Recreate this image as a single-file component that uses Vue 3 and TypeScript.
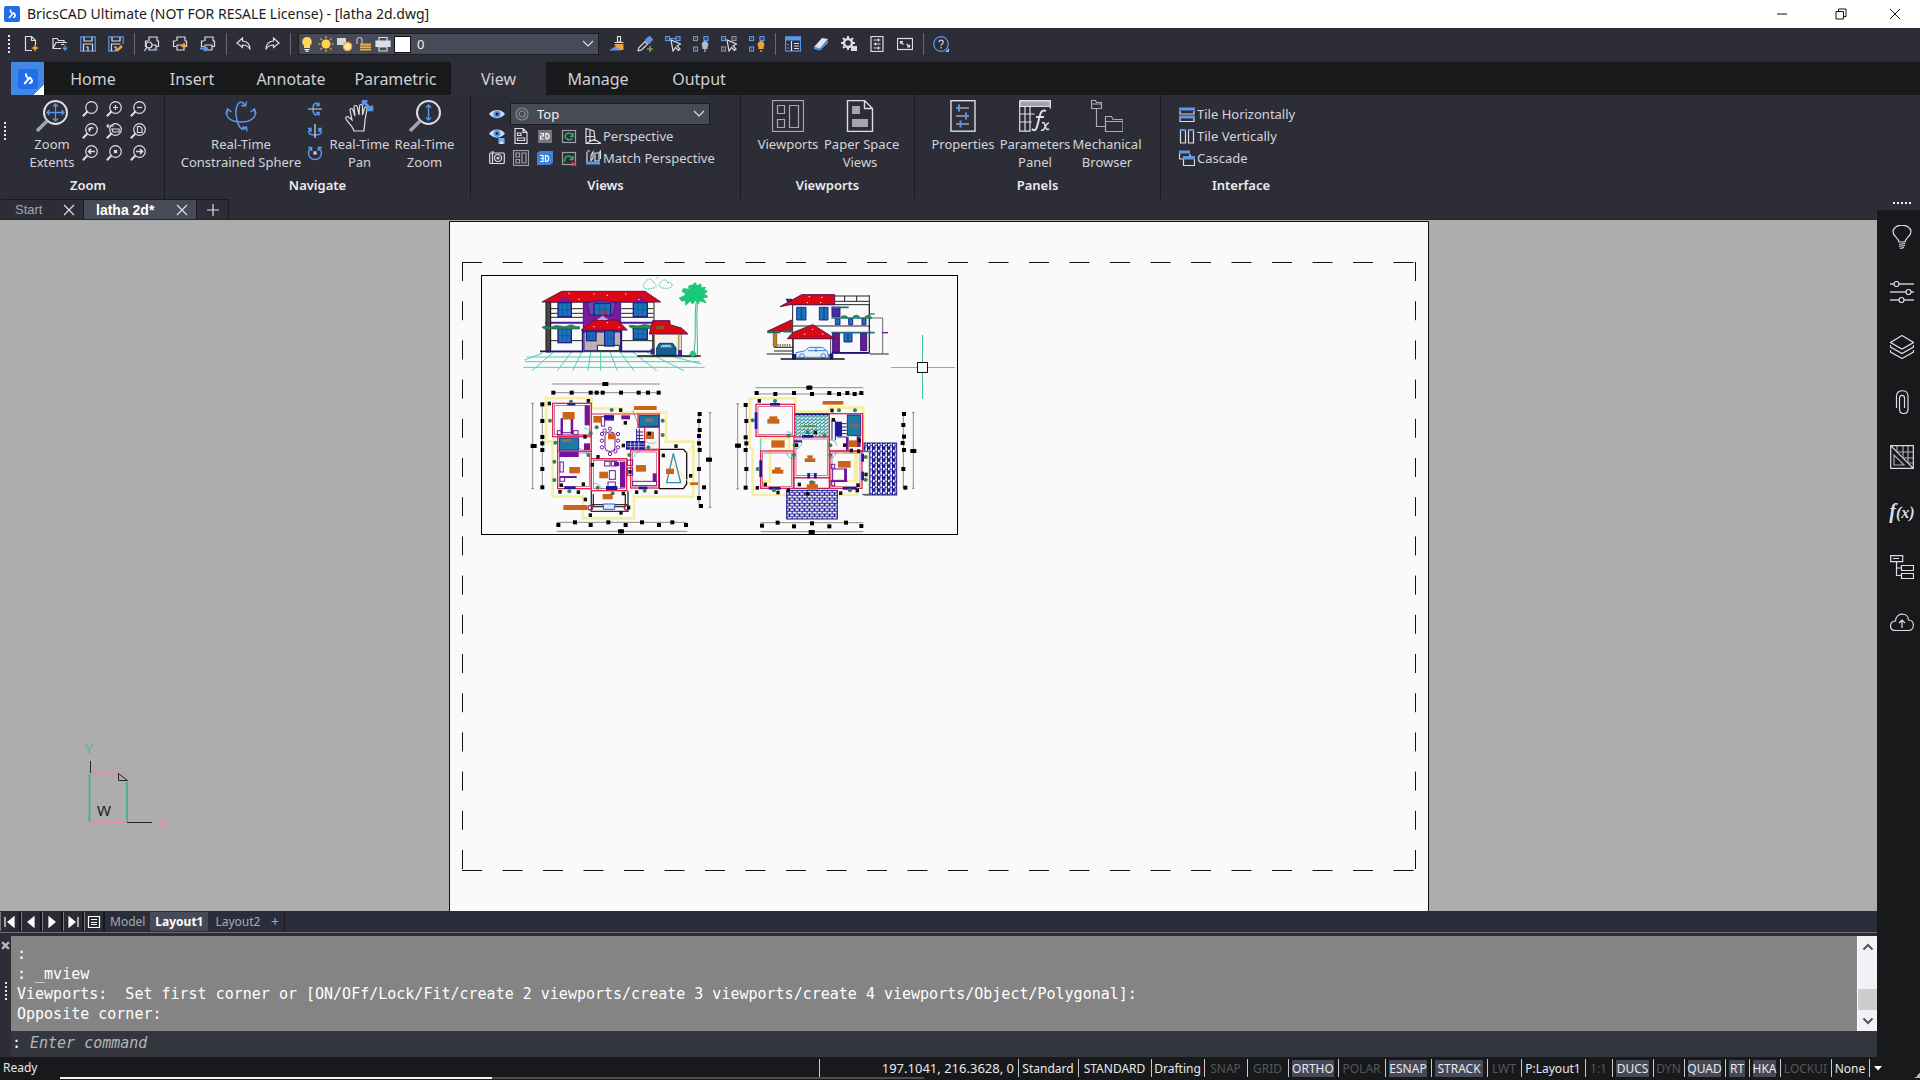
<script setup lang="ts">
import { ref } from 'vue'

type Box = [number, number, number, number]
type Dot = [number, number]

const L = '#dcdee6'
const B = '#5b97e8'
const O = '#f0a23a'
const lens = `<circle cx="9.500" cy="6.500" r="5.800"/><path d="M5.500 10.500L.8 15.200" stroke-width="2"/>`
const sq = (x: number, y: number, c: string) =>
  `<rect x="${x}" y="${y}" width="4" height="4" stroke="${c}"/><path d="M${x + 1.5} ${y + 2}h1" stroke="${c}"/>`
const printer = `<path d="M5 5V1h8v4M4 5H1.500v5.500H4M13 5h1.500v5.500H12M5 9h7v5H5z"/>`
const cursorArrow = `<path d="M6 4l2 11 2.500-3.500 3 3 1.500-1.500-3-3 3.500-2z" fill="#2d2d38"/>`

/* Glyph bodies, drawn on a 16-unit grid unless listed in bigIcons */
const icons: Record<string, string> = {
  brand: `<rect width="16" height="16" rx="2" fill="#1f6fe8" stroke="none"/><path d="M6.500 3.500v2l2 2.500-3.500 4M9 6.500c3 2 3 4 0 5" stroke="#fff" stroke-width="1.600"/>`,
  newFile: `<path d="M8 14.500H1.500v-14h6l4 4V9M7.500.5v4h4"/><path d="M11 8l1.200 2.800L15 12l-2.800 1.200L11 16l-1.200-2.800L7 12l2.800-1.200z" fill="${O}" stroke="none"/>`,
  open: `<path d="M9 12.500H1v-10h4l1.500 2H12v2M1 12.500l3-6h11M9 8.500h3"/><path d="M13 8.500v5M10.800 11.500L13 14l2.200-2.500" stroke="${B}"/>`,
  save: `<path d="M.8.8h14.400v14.400H.8z" stroke="${B}"/><path d="M4 1v4h8V1M3.500 15V8h9v7M6 11h2v4"/>`,
  saveAs: `<path d="M15.200 8V.8H.8v14.400h8" stroke="${B}"/><path d="M4 1v4h8V1M3.500 15V8h9M6 11h2v4"/><path d="M9 14.500l5-4.500" stroke="${O}" stroke-width="2.500"/>`,
  preview: printer + `<circle cx="5" cy="9" r="3" fill="#2d2d38"/><path d="M3 11l-2.500 4"/><path d="M10 12l4 2" stroke="${B}"/>`,
  print: printer + `<path d="M12 6l1.200 2.800L16 10l-2.800 1.200L12 14l-1.200-2.800L8 10l2.800-1.200z" fill="${O}" stroke="none"/>`,
  publish: printer + `<path d="M0 12.500h6M4 10l3 2.500L4 15" stroke="${B}" stroke-width="2"/>`,
  undo: `<path d="M6.500 2L1 7l5.500 4.500V9c4 0 6 1 7.500 4.500C14 8 11 5.300 6.500 5z"/>`,
  redo: `<path d="M9.500 2L15 7l-5.500 4.500V9C5.500 9 3.500 10 2 13.500 2 8 5 5.300 9.500 5z"/>`,
  bulb: `<path d="M8 1a4.800 4.800 0 0 0-3 8.500V12h6V9.500A4.800 4.800 0 0 0 8 1z" fill="#ffd75a" stroke="none"/><path d="M5.500 13.500h5M6.500 15.200h3" stroke="#fff"/>`,
  sun: `<circle cx="8" cy="8" r="4.500" fill="#ffd54a" stroke="none"/><path d="M8 0v2.500M8 13.500V16M0 8h2.500M13.500 8H16M2.300 2.300l1.800 1.800M11.900 11.900l1.800 1.800M13.700 2.300l-1.800 1.800M4.100 11.900l-1.800 1.800" stroke="#f0b030"/>`,
  vpFreeze: `<rect x="0" y="2" width="9" height="7" fill="#d8d8dc" stroke="none"/><circle cx="10.500" cy="10.500" r="4.200" fill="#ffe79a" stroke="${O}"/>`,
  lock: `<path d="M1 8V4a2.500 2.500 0 0 1 5 0v4" stroke="#b9bbc2"/><path d="M4 7.500h11v7H4z" fill="#e5b04e" stroke="none"/><path d="M4 10h11M4 12.500h11" stroke="#8a6630"/>`,
  plot: `<path d="M4 5V1.500h8V5M4 11h8v4H4z"/><path d="M1 5h14v5.500H1z" fill="${L}"/>`,
  brush: `<path d="M8.500.5h3V6h-3zM5.500 6.500h9"/><path d="M5.500 8h9v6h-7z" fill="${O}" stroke="none"/><path d="M0 14.500h12L6 10.500z" fill="${B}" stroke="none"/>`,
  picker: `<path d="M1 14.500l1-3 6-6 2.500 2.500-6 6-3 .8z"/><path d="M8.500 4l4-3.500 3 3L12 7.500z" fill="${B}" stroke="${B}"/><path d="M13 10v6M10 13h6" stroke="#86d04c"/>`,
  isolate: sq(.5, .5, B) + sq(11, .5, B) + `<path d="M5 2.500h6" stroke="${B}"/>` + cursorArrow,
  hide: sq(.5, .5, '#8d8d96') + sq(.5, 11, B) + sq(11, .5, B) + `<path d="M12 5.500a3 3 0 0 0-2 5v2h4v-2a3 3 0 0 0-2-5zM12 13v3" fill="#b9bbc4" stroke="#b9bbc4"/>`,
  showSel: sq(.5, .5, B) + sq(11, .5, '#8d8d96') + sq(.5, 11, '#8d8d96') + cursorArrow,
  showAll: sq(.5, .5, B) + sq(.5, 11, B) + sq(11, .5, B) + `<path d="M12 5.500a3 3 0 0 0-2 5v2h4v-2a3 3 0 0 0-2-5z" fill="${O}" stroke="${O}"/><path d="M11 15h2"/>`,
  explorer: `<rect x=".5" y="1" width="15" height="14" stroke="${B}"/><path d="M0 2.500h16" stroke="${B}" stroke-width="4"/><path d="M6.500 5v10M9 7.500h5M9 10h5M9 12.500h5"/><path d="M2 8.500h2M2 12h2" stroke="${B}"/>`,
  eraser: `<path d="M1 11L9 2l6 1-8 9.500z" fill="#dfe4ee" stroke="none"/><path d="M1 11l6 1.500 8-8.500v3l-8 7.500-6-1.500z" fill="${B}" stroke="none"/>`,
  gear: `<circle cx="7" cy="7" r="4" stroke-width="2.500"/><path d="M7 0v2M7 12v2M0 7h2M12 7h2M2 2l1.500 1.500M12 2l-1.500 1.500M2 12l1.500-1.500" stroke-width="2"/><rect x="10" y="10" width="6" height="5" fill="${L}" stroke="none"/>`,
  settings: `<rect x="2" y=".5" width="12" height="15"/><path d="M4.500 4h7M4.500 8h7M4.500 12h7M9.500 2.500v3M6.500 6.500v3M9.500 10.500v3"/>`,
  fullscreen: `<rect x=".5" y="2.500" width="15" height="11"/><path d="M3.500 8V5.500H6M3.500 5.500l3 3M12.500 8.500V11H10M12.500 11l-3-3"/>`,
  help: `<circle cx="8" cy="8" r="7.300" stroke="${B}"/><path d="M6 6.200c0-2.800 4.200-2.600 4.200 0 0 1.600-2.200 1.800-2.200 3.500M8 11v1.500"/><path d="M12 16h4v-4z" fill="#9ab8ea" stroke="none"/>`,
  zWindow: lens,
  zIn: lens + `<path d="M7 6.500h5M9.500 4v5"/>`,
  zOut: lens + `<path d="M7 6.500h5"/>`,
  zPrev: lens + `<path d="M7.500 9V6c0-1.500 3-2 4-.5M6 7l1.500-2L9 7"/>`,
  zDyn: lens + `<path d="M0 3h8M2 1v4M6 6h7v3H7z"/>`,
  zPage: lens + `<path d="M7.500 3.500h2.500l2 2v4H7.500z"/>`,
  zLeft: lens + `<path d="M13 6.500H7M9 4L6.500 6.500 9 9" stroke-width="1.600"/>`,
  zCenter: lens + `<rect x="8.500" y="5.500" width="2" height="2" fill="${L}"/>`,
  zRight: lens + `<path d="M6 6.500h6M10 4l2.500 2.500L10 9" stroke-width="1.600"/>`,
  rotX: `<g stroke="${B}" stroke-width="1.500"><path d="M11.500 4C9.500.5 6 2 6 8s3.500 7.500 5.500 4M9 4.500h3V1.500M9 11.500h3v3"/></g><path d="M1 8h14" stroke="#b4bccf"/>`,
  rotY: `<g stroke="${B}" stroke-width="1.500"><path d="M3.500 6C0 9 2 12 8 12s8-3 4.500-6M1 5.500h3V9M15 5.500h-3V9"/></g><path d="M8 1v14"/>`,
  rotZ: `<g stroke="${B}" stroke-width="1.500"><path d="M4 3a6.500 6.500 0 1 0 8 0M1 2.500h3.500V6M15 2.500h-3.500V6"/></g><rect x="7" y="7" width="2" height="2"/>`,
  eye: `<path d="M0 8c4-5.500 12-5.500 16 0-4 5.500-12 5.500-16 0z" fill="#c9dcf6" stroke="none"/><circle cx="8" cy="8" r="3.600" fill="${B}" stroke="none"/><circle cx="8" cy="8" r="1.500" fill="#111" stroke="none"/>`,
  eyeSave: `<path d="M0 5.500c4-5.500 12-5.500 16 0-4 5.500-12 5.500-16 0z" fill="#c9dcf6" stroke="none"/><circle cx="8" cy="5.500" r="3.400" fill="${B}" stroke="none"/><circle cx="8" cy="5.500" r="1.300" fill="#111" stroke="none"/><path d="M9.500 10h6v6h-6z" fill="#7fb2f4" stroke="none"/><path d="M12.500 14v2" stroke="#fff" stroke-width="2"/>`,
  camera: `<rect x=".7" y="3" width="14.600" height="10.500" rx="1"/><circle cx="9" cy="8" r="3.500"/><circle cx="9" cy="8" r="1"/><path d="M3.500 3v10M2 2h3"/>`,
  sheet: `<path d="M2 .5h8l4 4v11H2zM10 .5v4h4M4.500 5h3.500v2.500H4.500zM4.500 10h7v2.500h-7z"/>`,
  vports: `<g stroke="#a0a2aa"><rect x=".5" y=".5" width="15" height="15"/><path d="M3 3h3.500v4H3zM3 9.500h3.500V13H3zM9 3h4v10H9z"/></g>`,
  d2: `<path d="M1 2h14v13H1z" fill="#75777d" stroke="none"/><path d="M3.500 5.500h3V8h-3v3h3M9 5.500h1.500l1.500 1.500v2.500L10.500 11H9z" stroke="#fff" stroke-width="1.200"/>`,
  d3: `<path d="M0 3l3-2h13v12l-3 2H0z" fill="#3f82da" stroke="none"/><path d="M3 5.500h3v6H3M4 8.500h2M8.500 5.500H10l1.500 1.500v3L10 11.500H8.500z" stroke="#fff" stroke-width="1.200"/>`,
  regen: `<rect x="1.500" y="2.500" width="13" height="12" stroke="#9da0a6"/><path d="M4 10c0-6 6-6 8-2M12 5v3.500H9M4.500 9.500c3 4 6 2 7 1" stroke="#29b05d" stroke-width="1.500"/>`,
  regenAll: `<rect x="1.500" y="2.500" width="13" height="12" stroke="#9da0a6"/><path d="M3.500 12c0-8 6-7 8-3M12 6v3.500H8.500" stroke="#29b05d" stroke-width="1.600"/><path d="M11 12l4 4M15 12l-4 4" stroke="#d9404a" stroke-width="1.500"/>`,
  persp: `<path d="M1 .5v15h15L10 12 9 3zM1 15.500L10 11M5 2v11M1 8.500h8.500M4 12.500h8"/>`,
  matchP: `<path d="M2 2v11M5 1H2M6 5v6M6 5l2-3v6l-2 3M10 3h4v8h-4zM14 3l1.500-2v8"/><path d="M1 13h14" stroke="${B}" stroke-width="3"/>`,
  target: `<g stroke="#868c98"><circle cx="8" cy="8" r="6"/><circle cx="8" cy="8" r="3"/></g>`,
  tileH: `<path d="M1 5v3h14V5M1 12v3.500h14V12"/><path d="M0 3h16M0 11h16" stroke="${B}" stroke-width="3"/>`,
  tileV: `<path d="M1.500 2h5v13h-5zM9.500 2h5v13h-5z"/><path d="M1 2h6M9 2h6" stroke="${B}" stroke-width="2"/>`,
  cascade: `<path d="M.5 2v7H4M4.500 7h11v8.500h-11zM11 4v3"/><path d="M0 2h11M4 8h12" stroke="${B}" stroke-width="3"/>`,
}

/* Ribbon glyphs on a 32-unit grid */
const bigLens = `<circle cx="19.500" cy="12.500" r="11.500" stroke-width="2"/><path d="M11 21L1 31" stroke="#a3a4aa" stroke-width="3.500"/>`
const bigIcons: Record<string, string> = {
  extents: bigLens + `<g stroke="${B}" stroke-width="1.300"><path d="M19.500 4v17M11 12.500h17M17 6.500L19.500 4 22 6.500M17 18.500l2.500 2.500 2.500-2.500M13.500 10L11 12.500l2.500 2.500M25.500 10l2.500 2.500-2.500 2.500"/></g>`,
  sphere: `<g stroke="${B}" stroke-width="1.500"><path d="M3 10c-4 6 2 12 13 12s17-6 13-12M1 14l1.500-5 4 3M31 14l-1.500-5-4 3M20 5C13-4 9 10 12 20c2 8 6 12 9 7M16 5.500l4.500.5 1-4.500M17 27.500l4.500-.5.500 4.500"/></g>`,
  pan: `<path d="M10 31c-1-5-6-8-8-12-1-2 1-3 2.500-2L8 20 6 10c0-2 2.500-2 3 0l2 6-1-9c0-2 3-2 3.300 0L15 15l.5-9c.2-2 3-2 3 0v9l2-7c.7-2 3-1 2.600.8L21 20c0 5-1 7-1 11z"/><path d="M19 1l9 9M23.500 1H19v4.500M28 5.500V10h-4.500" stroke="${B}" stroke-width="2.500"/>`,
  rtZoom: bigLens + `<path d="M19.500 5v15M17 7.500L19.500 5 22 7.500M17 17.500l2.500 2.500 2.500-2.500" stroke="${B}" stroke-width="1.400"/>`,
  viewports: `<g stroke="#a9abb2"><rect x=".5" y=".5" width="31" height="31"/><path d="M5.500 5.500h7v8h-7zM5.500 19.500h7v8h-7zM17.500 5.500h9v22h-9z"/></g>`,
  paper: `<path d="M3.500.5h17l8 8v23h-25zM20.500.5v8h8" stroke-width="1.400"/><path d="M8 6h8v8H8zM8 19h16v8H8z" fill="#a5a6ac" stroke="none"/>`,
  props: `<rect x="4" y=".7" width="24" height="30.500" stroke-width="1.400"/><path d="M9 8h13M9 16h13M9 24h13"/><path d="M12 4.500v7M19 12.500v7M13.500 20.500v7" stroke="${B}" stroke-width="2"/>`,
  params: `<path d="M.7.7h30.600v8M.7.7v30.500h11M.7 14h15M.7 22h12M6 6v25M11 6v25"/><path d="M1 1h30v5.500H1z" fill="#a3a4aa" stroke="${L}"/><path d="M13 29c4 4 5-2 7-10 1.500-7 3-10 7-8M17 17h8" stroke-width="2"/><path d="M23 23c4-3 2 9 7 6M30 23c-4 0-4 9-8 7" stroke-width="1.500"/>`,
  mech: `<g stroke="#a9abb2"><path d="M.5 8.500v-8h4l1 2h5v6zM.5 4h10M5.500 9v17.500h9M14.500 31.500v-15h6l1.500 3h10v12zM14.500 21.500h17"/></g>`,
}

/* Side bar glyphs on a 24-unit grid */
const panelIcons: { name: string; body: string }[] = [
  { name: 'Tips', body: `<path d="M9 17c0-4-6-5-6-10.500C4-2 20-2 21 6.500c0 5.500-6 6.500-6 10.500zM9 19.500l6-1M9 21.500l6-1M10 23.500l4-1"/>` },
  { name: 'Properties', body: `<path d="M0 4h4M9 4h15M0 12h16M21 12h3M0 20h9M14 20h10" stroke-width="1.800" stroke="#9a9ca4"/><circle cx="6.500" cy="4" r="2.500"/><circle cx="18.500" cy="12" r="2.500"/><circle cx="11.500" cy="20" r="2.500"/>` },
  { name: 'Layers', body: `<path d="M12 .5l11.500 7L12 14 .5 7.500zM.5 10v2L12 18.500 23.500 12v-2M.5 15v2L12 23.500 23.500 17v-2"/>` },
  { name: 'Attachments', body: `<path d="M6.500 18V6C6.500-1 18-1 18 6v13c0 6-8.500 6-8.500 0V8c0-3.500 5-3.500 5 0v10"/>` },
  { name: 'Hatch', body: `<path d="M.7.7h22.600v22.600H.7zM.7.7l22.600 22.600"/><path d="M4 10v10h10zM7 1v6h16M13 1v12h10M18 1v17h5" stroke="#a9abb2"/>` },
  { name: 'Parameters', body: '' },
  { name: 'Structure', body: `<path d="M.7.7h12v6h-12zM3 3.500h6M6.500 7v13.500H12M6.500 13H12M11.500 10.500h12v5h-12zM11.500 18.500h12v5h-12z"/>` },
  { name: 'Cloud', body: `<path d="M6 20.500C-1.500 20.500-1 11.500 5.500 11 6 2 18 2 18.500 10c6.500 0 6.500 10.500 0 10.500zM12 18v-8M9 13l3-3 3 3"/>` },
]

interface Tool { id: string; label: string }
const t = (id: string, label: string): Tool => ({ id, label })
const fileTools: Tool[][] = [
  [t('newFile', 'New'), t('open', 'Open'), t('save', 'Save'), t('saveAs', 'Save as')],
  [t('preview', 'Print preview'), t('print', 'Print'), t('publish', 'Publish')],
  [t('undo', 'Undo'), t('redo', 'Redo')],
]
const layerTools: Tool[][] = [
  [t('brush', 'Match properties'), t('picker', 'Pick'), t('isolate', 'Isolate'), t('hide', 'Hide'), t('showSel', 'Show selected'), t('showAll', 'Show all')],
  [t('explorer', 'Explorer'), t('eraser', 'Purge'), t('gear', 'Options'), t('settings', 'Settings'), t('fullscreen', 'Clean screen')],
  [t('help', 'Help')],
]
const layerState = ['bulb', 'sun', 'vpFreeze', 'lock', 'plot']

const ribbonTabs = ['Home', 'Insert', 'Annotate', 'Parametric', 'View', 'Manage', 'Output']
const activeTab = ref('View')
const zooms = ['zWindow', 'zIn', 'zOut', 'zPrev', 'zDyn', 'zPage', 'zLeft', 'zCenter', 'zRight']
const rotations = ['rotX', 'rotY', 'rotZ']
const viewRows: { tools: string[]; label: string }[] = [
  { tools: ['eyeSave', 'sheet', 'd2', 'regen', 'persp'], label: 'Perspective' },
  { tools: ['camera', 'vports', 'd3', 'regenAll', 'matchP'], label: 'Match Perspective' },
]
const windowTools: Tool[] = [t('tileH', 'Tile Horizontally'), t('tileV', 'Tile Vertically'), t('cascade', 'Cascade')]

const layer = ref('0')
const view = ref('Top')
const command = ref('')
const log = [
  ':',
  ': _mview',
  'Viewports:  Set first corner or [ON/OFf/Lock/Fit/create 2 viewports/create 3 viewports/create 4 viewports/Object/Polygonal]:',
  'Opposite corner:',
]
const layouts = ['Model', 'Layout1', 'Layout2']
const activeLayout = ref('Layout1')
const navGlyphs = [
  { name: 'First', d: 'M3 3v10M12 3v10L6 8z' },
  { name: 'Previous', d: 'M11 3v10L5 8z' },
  { name: 'Next', d: 'M5 3v10l6-5z' },
  { name: 'Last', d: 'M13 3v10M4 3v10l6-5z' },
]

interface Cell { text: string; w: number; state?: 'on' | 'off' }
const cells: Cell[] = [
  { text: 'Standard', w: 60 }, { text: 'STANDARD', w: 73 }, { text: 'Drafting', w: 53 },
  { text: 'SNAP', w: 43, state: 'off' }, { text: 'GRID', w: 41, state: 'off' },
  { text: 'ORTHO', w: 50, state: 'on' }, { text: 'POLAR', w: 47, state: 'off' },
  { text: 'ESNAP', w: 46, state: 'on' }, { text: 'STRACK', w: 56, state: 'on' },
  { text: 'LWT', w: 34, state: 'off' }, { text: 'P:Layout1', w: 64 }, { text: '1:1', w: 27, state: 'off' },
  { text: 'DUCS', w: 41, state: 'on' }, { text: 'DYN', w: 31, state: 'off' },
  { text: 'QUAD', w: 41, state: 'on' }, { text: 'RT', w: 24, state: 'on' }, { text: 'HKA', w: 31, state: 'on' },
  { text: 'LOCKUI', w: 51, state: 'off' }, { text: 'None', w: 38 },
]

/* Floor plans: units are thirds of a screen pixel */
interface Plan {
  x: number; y: number; yellow: string; walls: Box[]; inner: Box[]; orange: Box[]; purple: Box[]
  furniture: Box[]; navy: Box[]; teal: Box[]; green: Dot[]; ticks: Dot[]; marks: Dot[]; dims: string
}
const plans: Plan[] = [
  {
    x: 510, y: 370,
    yellow: 'M108 84H245V115H335V128H468V215H550V380H372V445H218V380H128V215H108z',
    walls: [[128, 100, 116, 100], [143, 198, 101, 46], [143, 244, 101, 112], [244, 266, 106, 96], [362, 240, 84, 114], [384, 132, 64, 40], [404, 170, 44, 68]],
    inner: [[134, 106, 104, 88], [149, 249, 89, 101], [250, 272, 94, 84], [368, 246, 72, 102]],
    orange: [[158, 126, 36, 22], [372, 108, 68, 12], [250, 138, 24, 20], [408, 185, 24, 22], [294, 190, 22, 18], [178, 291, 32, 19], [378, 285, 30, 20], [268, 305, 26, 20], [468, 296, 24, 16], [278, 372, 30, 16], [160, 405, 72, 15], [540, 337, 24, 8]],
    purple: [[224, 106, 15, 60], [152, 146, 7, 46], [182, 146, 7, 46], [282, 136, 30, 16], [334, 136, 26, 12], [148, 246, 58, 15], [330, 275, 16, 78], [222, 220, 18, 20], [150, 318, 50, 6], [312, 276, 16, 12], [428, 310, 12, 26]],
    furniture: [[154, 146, 34, 42], [142, 182, 14, 12], [190, 182, 14, 12], [284, 274, 16, 14], [304, 274, 16, 14], [298, 302, 18, 26], [294, 336, 22, 14], [352, 270, 16, 16], [352, 294, 16, 22], [150, 276, 10, 30], [150, 322, 14, 12], [368, 334, 72, 13], [274, 140, 10, 28]],
    navy: [[172, 99, 24, 7], [163, 349, 34, 8], [288, 348, 34, 12], [386, 350, 26, 8], [282, 136, 30, 10], [348, 213, 56, 26]],
    teal: [[148, 204, 58, 36], [388, 137, 58, 32]],
    green: [[183, 95], [120, 152], [136, 218], [133, 275], [133, 330], [305, 120], [260, 172], [458, 152], [458, 195], [415, 232], [235, 255], [358, 255], [178, 364], [263, 353], [308, 370], [404, 362], [242, 190]],
    ticks: [[130, 68], [185, 68], [242, 68], [260, 68], [278, 68], [333, 68], [386, 68], [414, 68], [446, 68], [97, 103], [97, 153], [97, 201], [97, 220], [97, 240], [97, 297], [97, 352], [569, 132], [567, 153], [569, 180], [567, 198], [567, 220], [569, 240], [567, 297], [582, 352], [567, 384], [573, 408], [145, 465], [195, 457], [242, 465], [295, 457], [347, 465], [396, 457], [447, 465], [487, 457], [528, 465], [283, 42], [289, 42], [68, 228], [600, 269], [336, 484], [74, 228], [594, 269], [330, 484]],
    marks: [[118, 100], [235, 92], [332, 120], [225, 200], [346, 158], [498, 228], [247, 284], [264, 260], [340, 226], [360, 305], [150, 365], [154, 345], [205, 366], [220, 342], [226, 388], [380, 366], [438, 366], [460, 256], [542, 317], [333, 428], [241, 435], [356, 412], [340, 370], [418, 190]],
    dims: 'M125 42H450M125 68H450M68 100V356M97 100V356M567 128V412M600 128V412M140 457H530M140 484H532M64 100h8M64 356h8M596 128h8M596 412h8',
  },
  {
    x: 720, y: 375,
    yellow: 'M90 70H226V110H325V98H430V228H410V360H98V220H90zM122 190H208V225H150V320H122zM370 232H405V318H370',
    walls: [[108, 88, 116, 96], [122, 228, 98, 112], [222, 186, 106, 122], [328, 116, 100, 112], [330, 228, 96, 112]],
    inner: [[114, 94, 104, 84], [128, 234, 86, 100], [228, 192, 94, 110], [336, 234, 84, 100]],
    orange: [[308, 78, 62, 11], [142, 132, 36, 14], [148, 124, 24, 12], [154, 196, 40, 22], [156, 284, 34, 12], [164, 277, 18, 10], [254, 250, 32, 11], [262, 241, 16, 10], [354, 258, 38, 20], [260, 328, 34, 16], [268, 318, 18, 12], [386, 196, 26, 20]],
    purple: [[410, 184, 12, 32], [378, 186, 8, 40], [332, 316, 50, 5], [374, 280, 7, 38]],
    furniture: [[338, 282, 36, 34], [334, 268, 10, 12], [334, 318, 10, 14]],
    navy: [[104, 112, 8, 50], [150, 84, 30, 8], [246, 180, 34, 8], [118, 256, 8, 50], [146, 336, 36, 8], [368, 336, 42, 8], [346, 140, 20, 44], [424, 236, 8, 24], [424, 290, 8, 26], [222, 196, 24, 6], [262, 294, 8, 16], [282, 294, 8, 16]],
    teal: [[382, 120, 40, 62]],
    green: [[165, 78], [98, 136], [206, 182], [224, 211], [222, 240], [331, 211], [331, 240], [263, 172], [313, 182], [113, 282], [357, 106], [405, 106], [162, 346], [390, 346], [437, 246], [437, 314], [275, 322]],
    ticks: [[110, 54], [166, 57], [222, 54], [276, 57], [328, 54], [357, 57], [382, 54], [404, 57], [424, 54], [77, 90], [79, 138], [77, 187], [79, 205], [77, 225], [79, 282], [77, 338], [552, 117], [550, 150], [552, 185], [548, 204], [552, 225], [550, 282], [556, 338], [126, 452], [173, 443], [222, 454], [276, 445], [328, 454], [378, 443], [424, 453], [265, 38], [271, 38], [51, 212], [57, 212], [577, 228], [583, 228], [272, 471], [278, 471]],
    marks: [[118, 77], [336, 106], [340, 134], [286, 172], [374, 210], [394, 226], [416, 228], [418, 196], [238, 328], [112, 338], [136, 328], [174, 352], [205, 345], [262, 356], [362, 354], [414, 330], [438, 298], [230, 210], [412, 346]],
    dims: 'M106 38H430M106 57H430M53 86V342M79 86V342M550 113V340M580 113V340M122 443H430M122 470H430M49 86h8M49 342h8M576 113h8M576 340h8',
  },
]
const diningChairs: Dot[] = [[300, 176], [300, 252], [276, 192], [276, 212], [276, 232], [324, 192], [324, 212], [324, 232], [284, 182], [316, 244]]
const upperWindows: Box[] = [[144, 98, 40, 42], [370, 98, 42, 42], [144, 176, 40, 42], [370, 176, 42, 32], [252, 100, 50, 36], [230, 184, 28, 28], [284, 182, 28, 46]]
</script>

<template>
  <div class="app">
    <header class="title">
      <svg class="i16" viewBox="0 0 16 16" v-html="icons.brand" />
      <h1>BricsCAD Ultimate (NOT FOR RESALE License) - [latha 2d.dwg]</h1>
      <div class="wincontrols">
        <button aria-label="Minimize"><svg viewBox="0 0 12 12"><path d="M1 6h10" /></svg></button>
        <button aria-label="Restore"><svg viewBox="0 0 12 12"><path d="M1 3.500h7.500V11H1zM3.500 3.500V1H11v7.500H8.500" /></svg></button>
        <button aria-label="Close"><svg viewBox="0 0 12 12"><path d="M1 1l10 10M11 1L1 11" /></svg></button>
      </div>
    </header>

    <div class="toolbar">
      <span class="grip" />
      <div v-for="(group, g) in fileTools" :key="g" class="tools">
        <button v-for="tool in group" :key="tool.id" :aria-label="tool.label">
          <svg class="i16" viewBox="0 0 16 16" v-html="icons[tool.id]" />
        </button>
      </div>
      <span class="divider" />
      <label class="layerbox">
        <svg v-for="s in layerState" :key="s" class="i16" viewBox="0 0 16 16" v-html="icons[s]" />
        <span class="swatch" />
        <select v-model="layer" aria-label="Current layer"><option>0</option></select>
        <svg class="chev" viewBox="0 0 12 8"><path d="M1 1l5 5 5-5" /></svg>
      </label>
      <div v-for="(group, g) in layerTools" :key="'l' + g" class="tools">
        <button v-for="tool in group" :key="tool.id" :aria-label="tool.label">
          <svg class="i16" viewBox="0 0 16 16" v-html="icons[tool.id]" />
        </button>
      </div>
    </div>

    <nav class="tabs">
      <button class="appmenu" aria-label="Application menu">
        <svg class="i20" viewBox="0 0 16 16" v-html="icons.brand" />
      </button>
      <button v-for="tab in ribbonTabs" :key="tab" :class="['tab', tab.toLowerCase(), { active: tab === activeTab }]" @click="activeTab = tab">{{ tab }}</button>
    </nav>

    <div class="ribbon">
      <span class="grip ribbongrip" />
      <section class="group gzoom">
        <div class="body">
          <button class="big"><svg viewBox="0 0 32 32" v-html="bigIcons.extents" />Zoom<br>Extents</button>
          <div class="grid3">
            <button v-for="z in zooms" :key="z" :aria-label="z"><svg class="i16" viewBox="0 0 16 16" v-html="icons[z]" /></button>
          </div>
        </div>
        <h2>Zoom</h2>
      </section>
      <section class="group gnav">
        <div class="body">
          <button class="big wide"><svg viewBox="0 0 32 32" v-html="bigIcons.sphere" />Real-Time<br>Constrained Sphere</button>
          <div class="grid1">
            <button v-for="r in rotations" :key="r" :aria-label="r"><svg class="i16" viewBox="0 0 16 16" v-html="icons[r]" /></button>
          </div>
          <button class="big mid"><svg viewBox="0 0 32 32" v-html="bigIcons.pan" />Real-Time<br>Pan</button>
          <button class="big mid"><svg viewBox="0 0 32 32" v-html="bigIcons.rtZoom" />Real-Time<br>Zoom</button>
        </div>
        <h2>Navigate</h2>
      </section>
      <section class="group gviews">
        <div class="body rows">
          <div class="row">
            <button aria-label="Views"><svg class="i16" viewBox="0 0 16 16" v-html="icons.eye" /></button>
            <label class="viewbox">
              <svg class="i16" viewBox="0 0 16 16" v-html="icons.target" />
              <select v-model="view" aria-label="View"><option>Top</option></select>
              <svg class="chev" viewBox="0 0 12 8"><path d="M1 1l5 5 5-5" /></svg>
            </label>
          </div>
          <div v-for="row in viewRows" :key="row.label" class="row">
            <button v-for="(id, i) in row.tools" :key="id" :class="{ labelled: i === 4 }" :aria-label="i === 4 ? undefined : id">
              <svg class="i16" viewBox="0 0 16 16" v-html="icons[id]" /><template v-if="i === 4">{{ row.label }}</template>
            </button>
          </div>
        </div>
        <h2>Views</h2>
      </section>
      <section class="group gvports">
        <div class="body">
          <button class="big std"><svg viewBox="0 0 32 32" v-html="bigIcons.viewports" />Viewports</button>
          <button class="big std"><svg viewBox="0 0 32 32" v-html="bigIcons.paper" />Paper Space<br>Views</button>
        </div>
        <h2>Viewports</h2>
      </section>
      <section class="group gpanels">
        <div class="body">
          <button class="big std"><svg viewBox="0 0 32 32" v-html="bigIcons.props" />Properties</button>
          <button class="big std"><svg viewBox="0 0 32 32" v-html="bigIcons.params" />Parameters<br>Panel</button>
          <button class="big std"><svg viewBox="0 0 32 32" v-html="bigIcons.mech" />Mechanical<br>Browser</button>
        </div>
        <h2>Panels</h2>
      </section>
      <section class="group giface">
        <div class="body rows">
          <div v-for="w in windowTools" :key="w.id" class="row">
            <button class="labelled"><svg class="i16" viewBox="0 0 16 16" v-html="icons[w.id]" />{{ w.label }}</button>
          </div>
        </div>
        <h2>Interface</h2>
      </section>
    </div>

    <div class="work">
      <main class="main">
        <div class="docs">
          <div class="doc first"><button class="name">Start</button><button class="x" aria-label="Close Start"><svg viewBox="0 0 12 12"><path d="M1 1l10 10M11 1L1 11" /></svg></button></div>
          <div class="doc current"><button class="name">latha 2d*</button><button class="x" aria-label="Close latha 2d"><svg viewBox="0 0 12 12"><path d="M1 1l10 10M11 1L1 11" /></svg></button></div>
          <button class="doc add" aria-label="New tab"><svg viewBox="0 0 12 12"><path d="M6 0v12M0 6h12" /></svg></button>
        </div>

        <div class="canvas">
          <svg viewBox="0 220 1877 691" preserveAspectRatio="xMinYMin slice" fill="none" stroke-width="1">
            <defs>
              <pattern id="brick" width="15" height="16" patternUnits="userSpaceOnUse">
                <rect width="15" height="16" fill="#1d1a8e" /><path d="M1 2h10v5H1zM0 10h5v5H0zM8 10h7v5H8z" fill="#fafaff" />
              </pattern>
              <pattern id="cols" width="15" height="18" patternUnits="userSpaceOnUse">
                <rect width="15" height="18" fill="#1d1a8e" /><path d="M1 1h5v10H1zM9 8h5v8H9zM1 14h5v3H1z" fill="#fafaff" />
              </pattern>
              <pattern id="wave" width="12" height="10" patternUnits="userSpaceOnUse">
                <rect width="12" height="10" fill="#f0f8f8" /><path d="M0 2l6 5 6-5M0 8l3 2M9 0l3 2" stroke="#1f8b95" stroke-width="3" />
              </pattern>
            </defs>
            <path d="M449.500 915V221.500H1428.500V915" fill="#fafafa" stroke="#111" />
            <g stroke="#111">
              <path d="M462 262.500H1415.500M462 870.500H1415.500" stroke-dasharray="20 20.500" />
              <path d="M462.500 262V870M1415.500 262V870" stroke-dasharray="19 20.200" />
            </g>
            <rect x="481.500" y="275.500" width="476" height="259" stroke="#000" />

            <!-- front elevation -->
            <g transform="translate(510 270) scale(.33333)" stroke-width="3">
              <g stroke="#4fcfae" stroke-width="3">
                <path d="M50 261H560M45 275H570M40 292H584" />
                <path d="M130 246L66 302M185 246L142 302M215 246L188 302M242 246L234 302M272 246V302M300 246L322 302M330 246L372 302M368 246L440 302M410 246L522 302M96 250L44 270M450 250L574 282" />
              </g>
              <path d="M120 96H432V245H120z" fill="#fafafa" stroke="#222" />
              <path d="M120 116H220M120 130H220M120 142H220M334 116H430M334 130H430M334 142H430M120 212H220M334 212H430" stroke="#222" />
              <path d="M106 158H434" stroke="#4b1a9e" stroke-width="6" />
              <path d="M108 96h14v150h-14z" fill="#4a4646" stroke="#111" />
              <path d="M220 98h112v90H220z" fill="#7d1a9c" stroke="#3a1a8e" />
              <path d="M222 186h110v56H222z" fill="#b9b3b0" stroke="#2b1a7e" />
              <path d="M262 226h66v16h-66z" fill="#fafafa" stroke="#222" />
              <path d="M155 64H405L452 96H96z" fill="#dc0714" stroke="#5a1450" />
              <path d="M145 98l18-18 22 18M372 98l18-18 24 18" fill="#a01068" stroke="#6a1aa8" />
              <path d="M232 100c20-10 60-10 84 0l-6 34H240z" fill="#6a4aa6" stroke="#3a1a8e" />
              <g v-for="(w, i) in upperWindows" :key="'w' + i">
                <rect :x="w[0]" :y="w[1]" :width="w[2]" :height="w[3]" fill="#1876b8" stroke="#2b1a8e" stroke-width="4" />
                <path :d="`M${w[0] + w[2] / 3} ${w[1]}v${w[3]}M${w[0] + (w[2] * 2) / 3} ${w[1]}v${w[3]}M${w[0]} ${w[1] + w[3] / 2}h${w[2]}`" stroke="#174a9e" stroke-width="2" />
              </g>
              <path d="M214 180L252 150H322L352 180z" fill="#dc0714" stroke="#5a1450" />
              <path d="M258 150l20-14 20 14" fill="#bfa6c8" stroke="#7d1a9c" />
              <path d="M268 132l6-12 6 10 8-8 2 12" stroke="#d0202c" />
              <path d="M175 70h4M205 88h4M250 72h4M290 76h4M345 72h4M385 88h4M290 158h4M250 170h4M325 172h4M455 182h4M500 182h4" stroke="#fff" />
              <path d="M96 172c14-8 20 4 34-3s30 6 44-2 24 8 34 2v8H104zM356 168c12-6 24 4 36-2s26 2 34 0v10h-58z" fill="#2b8a4a" stroke="#1e5a60" stroke-width="2" />
              <path d="M218 180v62M334 180v62M90 244H220M330 244H440" stroke="#1c1480" stroke-width="5" />
              <path d="M430 190h84v66h-84z" fill="#f7f2e8" stroke="#8a7a40" />
              <path d="M430 194v60" stroke="#4a4646" stroke-width="8" /><path d="M506 194v46" stroke="#a59a60" stroke-width="5" />
              <path d="M504 240h12v16h-12zM422 236h12v16h-12z" fill="#4b1a9e" />
              <path d="M428 152H480V164L514 174 534 192H418z" fill="#dc0714" stroke="#5a1450" />
              <path d="M440 168h22v10h-22z" fill="#6b6a20" />
              <path d="M440 256v-22l8-14h40l10 14v22z" fill="#175f8e" stroke="#0d3a66" />
              <path d="M450 232l6-8h24l6 8z" fill="#8fc8e8" stroke="none" />
              <path d="M382 258H572" stroke="#111" stroke-width="4" />
              <path d="M508 84l14-6 6-6-12-8 4-8 18 2-2-10 10-2 10-8 4 10 12-6 2 12 12-2-4 8 10 4-10 8 12 8-16 4 10 14-18-6-6 10-8-12-8 12-8-10-12 14-2-16-10 4z" fill="#19c878" stroke="#19c878" />
              <path d="M558 98c-6 50 2 100-6 150M562 98c-4 50 2 110 0 158M540 250h18" stroke="#2fbd86" />
              <path d="M544 242l8 0 8 12-12 6-10-6z" fill="#19c878" />
              <path d="M402 52c-8-12 8-14 8-20 6-8 18-6 18 4 16 6 12 20 0 18-8 4-20 4-26-2zM448 48c-4-8 6-12 8-16 8-6 16 0 16 6 18-4 18 14 6 16-10 2-24 2-30-6zM440 22l6 6" stroke="#3cc096" stroke-dasharray="5 3" />
            </g>

            <!-- side elevation -->
            <g transform="translate(730 270) scale(.33333)" stroke-width="3">
              <path d="M188 104H418V250H188z" fill="#fafafa" stroke="#222" />
              <path d="M314 78H420M314 94H416M344 78v16M380 78v16M418 76V250M188 168H420M110 252H190M420 252H476M132 232H190M132 243H190" stroke="#222" />
              <path d="M416 144H458V252" stroke="#666" />
              <path d="M416 132h18" stroke="#1e6f8e" stroke-width="4" /><path d="M456 188h18" stroke="#6a1a8c" stroke-width="4" />
              <path d="M215 74H314V104H180L150 110z" fill="#dc0714" stroke="#5a1450" />
              <path d="M166 86h20v10h-14z" fill="#3a1a8e" />
              <g fill="#1876b8" stroke="#1c2a8e">
                <path d="M200 112h28v38h-28zM268 112h26v38h-26zM342 188h24v28h-24zM316 146h14v18h-14zM356 146h12v18h-12zM396 146h12v18h-12z" /><path d="M214 112v38M282 112v38M354 188v28" />
              </g>
              <path d="M306 112h24v28h-24z" fill="#4b2a9e" stroke="#2b1a7e" /><path d="M304 112h52M304 144h118M304 188h130" stroke="#1e6f8e" stroke-width="5" />
              <path d="M334 142c8-4 14-4 18 2M370 142c6-6 14-6 18 2M406 142c6-6 14-4 18 4" stroke="#2b8a4a" stroke-width="7" />
              <path d="M308 190h20v56h-20zM392 190h18v52h-18z" fill="#6a1a8c" stroke="#2b1a7e" />
              <path d="M184 150V184H112z" fill="#dc0714" stroke="#5a1450" />
              <path d="M130 188h10v42h-10z" fill="#b08a2a" stroke="#8a6a1a" /><path d="M142 226h40" stroke="#8a7a60" stroke-width="8" stroke-dasharray="4 3" />
              <path d="M112 186h40M160 184h28" stroke="#2b6a5a" stroke-width="7" />
              <path d="M190 206h112v50H190z" fill="#fafafa" stroke="#4a3a4a" />
              <path d="M248 164L316 206H172L188 188z" fill="#dc0714" stroke="#5a1450" />
              <path d="M236 80h4M274 82h4M230 98h4M270 98h4M246 178h4M222 192h4M276 192h4" stroke="#fff" />
              <path d="M198 262v-14l28-6 10-10h42l14 12 4 18zM234 242h54M258 232v14" fill="#e4f0ff" stroke="#3a7ad8" />
              <circle cx="216" cy="258" r="7" stroke="#3a7ad8" /><circle cx="280" cy="258" r="7" stroke="#3a7ad8" />
              <path d="M188 254h8v12h-8zM300 254h8v12h-8zM306 248H416" fill="#1c1480" stroke="#1c1480" stroke-width="4" />
              <path d="M152 267H344" stroke="#111" stroke-width="4" />
            </g>

            <!-- floor plans -->
            <g v-for="(p, n) in plans" :key="n" :transform="`translate(${p.x} ${p.y}) scale(.33333)`">
              <path :d="p.yellow" stroke="#f7efa0" stroke-width="8" />
              <path :d="p.dims" stroke="#555" stroke-width="2" />
              <template v-if="n === 0">
                <path d="M244 132H384M244 132V266M350 266H244" stroke="#e0284a" stroke-width="3" />
                <path d="M448 238H520L530 248V342L520 356H448z" stroke="#111" stroke-width="4" />
                <path d="M530 248L552 222M448 238L548 350" stroke="#f2e890" stroke-width="3" />
                <path d="M490 250L470 338H512z" stroke="#3a8ea0" stroke-width="4" />
                <path d="M244 362V424H354V362M250 372V410H346V372M244 404H354" stroke="#333" stroke-width="4" />
                <path d="M280 402h34v16h-34z" fill="#dceaff" stroke="#2a5ad8" stroke-width="3" />
                <circle cx="241" cy="413" r="7" stroke="#b02060" stroke-width="4" /><circle cx="350" cy="413" r="7" stroke="#b02060" stroke-width="4" />
                <path d="M222 174a24 24 0 0 1 20 22M372 262a22 22 0 0 1 20-18M252 340a20 20 0 0 1 22 20M206 236a30 30 0 0 1 26 16M410 216c10 6 20 6 30 0" stroke="#58d4d4" stroke-width="3" />
                <path d="M368 120l20 54" stroke="#777" stroke-width="2" />
                <path d="M380 176v38M388 176v38M378 186h22M378 196h22M378 206h22" stroke="#1c1a90" stroke-width="3" />
              </template>
              <template v-else>
                <rect x="224" y="114" width="102" height="72" fill="url(#wave)" /><path d="M224 118H328" stroke="#1d1a8e" stroke-width="6" />
                <rect x="432" y="204" width="98" height="156" fill="url(#cols)" stroke="#1d1a8e" stroke-width="3" />
                <rect x="200" y="346" width="152" height="86" fill="url(#brick)" stroke="#1d1a8e" stroke-width="3" />
                <path d="M426 230h22v128h-22" fill="#fafafa" stroke="#555" stroke-width="3" />
                <path d="M245 150h46v6h-46z" fill="#7a8a50" />
                <path d="M346 136v60M352 146h28M352 156h28M352 166h28M352 176h28M352 186h28M336 136v60" stroke="#1c1a70" stroke-width="3" />
                <path d="M200 170a26 26 0 0 1 22 16M200 234a24 24 0 0 0 24 18M226 222a22 22 0 0 0 20-22M330 250a22 22 0 0 0 18-20M330 194a22 22 0 0 1 20 18M122 190V228M262 296h28" stroke="#58c8d4" stroke-width="3" />
                <path d="M224 308H328V340M222 308V340H328" stroke="#a02858" stroke-width="4" />
              </template>
              <rect v-for="(r, i) in p.walls" :key="'a' + i" :x="r[0]" :y="r[1]" :width="r[2]" :height="r[3]" stroke="#e8274b" stroke-width="4" />
              <rect v-for="(r, i) in p.inner" :key="'i' + i" :x="r[0]" :y="r[1]" :width="r[2]" :height="r[3]" stroke="#b03a7c" stroke-width="2" />
              <rect v-for="(r, i) in p.teal" :key="'t' + i" :x="r[0]" :y="r[1]" :width="r[2]" :height="r[3]" fill="#1b7ba3" stroke="#2a2a8e" stroke-width="3" />
              <rect v-for="(r, i) in p.furniture" :key="'f' + i" :x="r[0]" :y="r[1]" :width="r[2]" :height="r[3]" stroke="#6f1aa0" stroke-width="3" />
              <rect v-for="(r, i) in p.purple" :key="'p' + i" :x="r[0]" :y="r[1]" :width="r[2]" :height="r[3]" fill="#75119a" />
              <rect v-for="(r, i) in p.navy" :key="'n' + i" :x="r[0]" :y="r[1]" :width="r[2]" :height="r[3]" fill="#1c16a0" />
              <template v-if="n === 0">
                <rect x="285" y="186" width="30" height="58" rx="12" stroke="#6f1aa0" stroke-width="3" />
                <circle v-for="(c, i) in diningChairs" :key="'c' + i" :cx="c[0]" :cy="c[1]" r="5" stroke="#6f1aa0" stroke-width="3" />
                <path d="M350 222h54M350 230h54M362 214v24M374 214v24M386 214v24" stroke="#e8ecff" stroke-width="2" />
                <path d="M156 208h28v8h-28zM406 146h22v10h-22z" fill="#a06a50" />
              </template>
              <path v-else d="M388 146h28v12h-28z" fill="#6a6a70" />
              <rect v-for="(r, i) in p.orange" :key="'o' + i" :x="r[0]" :y="r[1]" :width="r[2]" :height="r[3]" fill="#cb6418" />
              <circle v-for="(c, i) in p.green" :key="'g' + i" :cx="c[0]" :cy="c[1]" r="6" fill="#3a7d52" />
              <rect v-for="(c, i) in p.ticks" :key="'k' + i" :x="c[0] - 6" :y="c[1] - 6" width="12" height="12" fill="#000" />
              <rect v-for="(c, i) in p.marks" :key="'m' + i" :x="c[0] - 5" :y="c[1] - 5" width="10" height="11" fill="#111" />
            </g>

            <!-- crosshair -->
            <path d="M891 367.500H917M928 367.500H955" stroke="#d58a96" />
            <path d="M922.500 335V362M922.500 373V399" stroke="#3fc4a4" />
            <rect x="917.500" y="362.500" width="10" height="10" stroke="#111" />

            <!-- UCS icon -->
            <path d="M89.500 774V822M127 782V822" stroke="#4fae94" stroke-width="2" />
            <path d="M91 773.500H118M90 822.500H127" stroke="#e88f9c" stroke-width="2" />
            <path d="M90.500 761V773M127 822.500H152M118.500 773.500V780.500H127.500z" stroke="#222" />
            <text x="89" y="754" class="ucs" fill="#5fb39c">Y</text>
            <text x="104" y="816" class="ucs" fill="#222">W</text>
            <text x="163" y="828" class="ucs" fill="#f08fa0">X</text>
          </svg>
        </div>

        <div class="layouts">
          <button v-for="g in navGlyphs" :key="g.name" class="nav" :aria-label="g.name"><svg viewBox="0 0 16 16"><path :d="g.d" /></svg></button>
          <button class="nav" aria-label="Layout list"><svg class="list" viewBox="0 0 16 16"><path d="M2.500 2.500h11v11h-11zM5 5.500h6M5 8.500h6M5 10.500h6" /></svg></button>
          <button v-for="l in layouts" :key="l" :class="['layout', { active: l === activeLayout }]" @click="activeLayout = l">{{ l }}</button>
          <button class="layout plus">+</button>
        </div>

        <div class="command">
          <div class="edge">
            <button aria-label="Close command line"><svg viewBox="0 0 8 8"><path d="M1 1l6 6M7 1L1 7" /></svg></button>
            <span class="grip" />
          </div>
          <div class="console">
            <div class="history">
              <pre>{{ log.join('\n') }}</pre>
              <div class="scroll">
                <button aria-label="Scroll up"><svg viewBox="0 0 12 8"><path d="M1.500 6.500L6 2l4.500 4.500" /></svg></button>
                <span class="thumb" />
                <button aria-label="Scroll down"><svg viewBox="0 0 12 8"><path d="M1.500 1.500L6 6l4.500-4.500" /></svg></button>
              </div>
            </div>
            <label class="entry"><span>:</span><input v-model="command" placeholder="Enter command"></label>
          </div>
        </div>
      </main>

      <aside class="side">
        <div class="dots"><span /></div>
        <button v-for="p in panelIcons" :key="p.name" :aria-label="p.name">
          <svg v-if="p.body" viewBox="0 0 24 24" v-html="p.body" />
          <span v-else class="fx">f<small>(x)</small></span>
        </button>
      </aside>
    </div>

    <footer class="status">
      <span class="ready">Ready</span>
      <div class="cell coords">197.1041, 216.3628, 0</div>
      <div v-for="c in cells" :key="c.text" :class="['cell', c.state]" :style="{ width: c.w + 'px' }"><button>{{ c.text }}</button></div>
      <div class="cell end"><button aria-label="More"><svg viewBox="0 0 8 5"><path d="M0 0h8L4 4.500z" /></svg></button></div>
      <i class="corner" />
      <div class="progress"><span /><span /></div>
    </footer>
  </div>
</template>

<style>
html, body { margin: 0; background: #18191b; }
</style>

<style scoped>
.app { display: flex; flex-direction: column; min-height: 100vh; background: #2d2d38; color: #d4d4da; font-family: "Noto Sans", "Open Sans", sans-serif; font-size: 13px; overflow: hidden; }
.app *, .app { box-sizing: border-box; }
button { background: none; border: 0; padding: 0; margin: 0; color: inherit; font: inherit; display: flex; align-items: center; justify-content: center; }
svg { display: block; flex: none; fill: none; stroke: #dcdee6; stroke-width: 1.2px; }
.i16 { width: 16px; height: 16px; }
.i20 { width: 20px; height: 20px; }

.title { display: flex; align-items: center; height: 28px; background: #fff; color: #1a1a1a; padding-left: 4px; }
.title h1 { flex: 1; margin: 0; padding-left: 7px; font: 400 14px/28px "Noto Sans", sans-serif; white-space: nowrap; }
.wincontrols { display: flex; }
.wincontrols button { width: 59px; height: 28px; }
.wincontrols button:last-child { width: 50px; }
.wincontrols svg { width: 12px; height: 12px; stroke: #111; stroke-width: 1px; }

.toolbar { display: flex; align-items: center; height: 34px; padding-bottom: 2px; }
.grip { width: 2px; height: 18px; background: repeating-linear-gradient(#e8e8ee 0 2px, transparent 2px 4px); flex: none; }
.toolbar > .grip { margin: 0 8px; }
.tools { display: flex; align-items: center; }
.tools button { width: 28px; height: 28px; }
.tools + .tools { border-left: 1px solid #686873; margin-left: 4px; padding-left: 3px; height: 22px; }
.divider { width: 1px; height: 22px; margin-left: 4px; background: #686873; }
.layerbox { display: flex; align-items: center; gap: 3px; width: 301px; height: 22px; margin: 0 4px 0 7px; background: #474b57; border: 1px solid #1c1d22; }
.swatch { width: 17px; height: 17px; background: #fff; border: 1px solid #111; }
select { appearance: none; flex: 1; min-width: 0; height: 20px; padding: 0 0 0 3px; border: 0; background: none; color: #f0f0f4; font: inherit; outline: 0; }
.chev { width: 12px; height: 8px; margin-right: 4px; }

.tabs { display: flex; height: 33px; margin-left: 11px; background: #18191b; flex: none; }
.appmenu { width: 33px; background: linear-gradient(135deg, transparent 84%, #fff 84%), #4287e8; }
.tab { width: 98px; font-size: 16px; color: #d0d0d4; }
.tab.insert { width: 100px; }
.tab.parametric { width: 111px; }
.tab.view { width: 95px; }
.tab.manage { width: 104px; }
.tab.active { background: #2e2e39; }

.ribbon { display: flex; height: 104px; flex: none; }
.ribbongrip { margin: 27px 6px 0 4px; }
.group { display: flex; flex-direction: column; border-right: 1px solid #1b1b22; flex: none; }
.group:last-child { border: 0; }
.gzoom { width: 153px; }
.gnav { width: 306px; }
.gviews { width: 270px; }
.gvports { width: 174px; }
.gpanels { width: 246px; }
.giface { width: 160px; }
.body { display: flex; height: 79px; }
h2 { margin: 0; font-size: 13px; line-height: 22px; font-weight: 600; color: #ececf0; text-align: center; }
.big { display: block; width: 50px; padding-top: 5px; line-height: 18px; white-space: nowrap; align-self: flex-start; text-align: center; }
.big svg { width: 32px; height: 32px; margin: 0 auto 3px; }
.gzoom .body { padding-left: 15px; }
.grid3 { display: grid; grid-template-columns: repeat(3, 24px); grid-auto-rows: 22px; padding: 3px 0 0 1px; align-content: start; }
.grid1 { display: grid; grid-template-columns: 24px; grid-auto-rows: 22px; padding: 3px 0 0 1px; align-content: start; }
.gnav .body { padding-left: 15px; }
.wide { width: 122px; }
.mid { width: 65px; }
.std { width: 72px; }
.gvports .body { padding-left: 11px; }
.gpanels .body { padding-left: 12px; }
.rows { flex-direction: column; padding-top: 8px; }
.row { display: flex; height: 22px; align-items: center; }
.row button { width: 24px; height: 22px; }
.row button.labelled { width: auto; justify-content: flex-start; padding-left: 4px; gap: 2px; white-space: nowrap; }
.gviews .body { padding-left: 14px; }
.giface .body { padding-left: 14px; }
.viewbox { display: flex; align-items: center; width: 200px; height: 22px; margin-left: 1px; padding-left: 3px; background: #474b57; border: 1px solid #1c1d22; }
.viewbox select { padding-left: 7px; }

.work { display: flex; flex: 1; min-height: 0; }
.main { flex: 1; min-width: 0; display: flex; flex-direction: column; }
.docs { display: flex; height: 21px; padding-left: 1px; border-bottom: 1px solid #24242c; flex: none; font: 13px "Liberation Sans", sans-serif; }
.doc { display: flex; align-items: center; justify-content: space-between; border: 1px solid #1a1a20; border-width: 1px 1px 0 0; }
.doc svg { width: 12px; height: 12px; }
.doc .x { width: 29px; }
.first { width: 83px; padding-left: 14px; color: #a3a4ac; }
.current { width: 113px; padding-left: 12px; background: #474b58; color: #fff; font-weight: 700; font-size: 14px; }
.add { width: 32px; justify-content: center; }
.canvas { flex: 1 1 0; min-height: 0; background: #adadad; overflow: hidden; }
.canvas svg { width: 100%; height: 100%; stroke: none; stroke-width: 1px; }
.ucs { font: 15px "Noto Sans", sans-serif; text-anchor: middle; }

.layouts { display: flex; height: 21px; padding: 1px 0; flex: none; background: #2b2e3a; font-size: 12px; }
.nav { width: 21px; border-left: 1px solid #777984; border-right: 2px solid #16171b; background: #2b2b35; }
.nav svg { width: 16px; height: 16px; fill: #fff; stroke: #fff; }
.nav svg.list { fill: none; }
.layout { padding: 0 5px; color: #a8a9b1; min-width: 45px; }
.layout.active { min-width: 58px; margin-right: 2px; background: #474b58; color: #fff; font-weight: 700; padding: 0 3px; }
.layout.plus { min-width: 20px; font-size: 14px; border-right: 1px solid #1a1a20; }

.command { display: flex; border-top: 1px solid #6c6c76; padding-top: 3px; flex: none; }
.edge { width: 11px; display: flex; flex-direction: column; align-items: center; gap: 32px; padding-top: 5px; }
.edge button { width: 9px; height: 9px; }
.edge svg { width: 9px; height: 9px; stroke-width: 2px; stroke: #b8b8c0; }
.console { flex: 1; min-width: 0; font-family: "DejaVu Sans Mono", monospace; font-size: 15px; }
.history { display: flex; height: 95px; background: #848484; }
pre { flex: 1; min-width: 0; margin: 0; padding: 8px 6px; font: inherit; line-height: 20px; color: #fff; overflow: hidden; }
.scroll { width: 20px; background: #f2f2f6; display: flex; flex-direction: column; border-left: 1px solid #fff; }
.scroll button { height: 21px; }
.scroll svg { width: 12px; height: 8px; stroke: #555; stroke-width: 2px; }
.thumb { height: 21px; background: #cdcdcd; margin-top: auto; }
.entry { display: flex; align-items: center; height: 26px; padding: 0 0 2px 1px; background: #33373d; color: #fff; }
.entry span { width: 18px; }
.entry input { flex: 1; min-width: 0; padding: 0; border: 0; background: none; outline: 0; color: #fff; font: inherit; height: 22px; }
.entry input::placeholder { color: #b4b5b9; font-style: italic; opacity: 1; }

.side { width: 43px; background: #18191b; display: flex; flex-direction: column; align-items: stretch; flex: none; }
.side button { height: 55px; padding: 0 0 2px 7px; }
.side svg { width: 24px; height: 24px; }
.dots { height: 11px; background: #2d2d38; padding: 3px 0 0 16px; flex: none; }
.dots span { display: block; width: 18px; height: 2px; background: repeating-linear-gradient(90deg, #f0f0f4 0 2px, transparent 2px 4px); }
.fx { font: italic 700 20px/20px "Liberation Serif", serif; color: #dcdee6; white-space: nowrap; }
.fx small { font-size: 16px; }

.status { display: flex; align-items: stretch; height: 23px; padding: 2px 2px 2px 0; background: #18191b; color: #e8e8ec; position: relative; flex: none; font-size: 12px; line-height: 18px; }
.ready { flex: 1; padding-left: 3px; line-height: 18px; }
.cell { border-left: 1px solid #c8c8cc; padding: 1px 4px 1px 3px; height: 18px; flex: none; }
.cell button { width: 100%; height: 17px; white-space: nowrap; }
.coords { width: 199px; font-size: 13px; text-align: right; line-height: 17px; }
.cell.on button { background: #464858; }
.cell.off button { color: #55565c; }
.end { width: 49px; }
.end button { width: 9px; }
.end svg { width: 8px; height: 5px; fill: #fff; stroke: none; }
.corner { position: absolute; right: 0; bottom: 2px; width: 5px; height: 5px; background: linear-gradient(135deg, transparent 50%, #b8b8bc 50%); }
.progress { position: absolute; left: 60px; bottom: 1px; display: flex; width: 45%; height: 2px; }
.progress span { flex: 1; background: #f4f4f4; }
.progress span + span { background: #4a4b50; }
</style>
